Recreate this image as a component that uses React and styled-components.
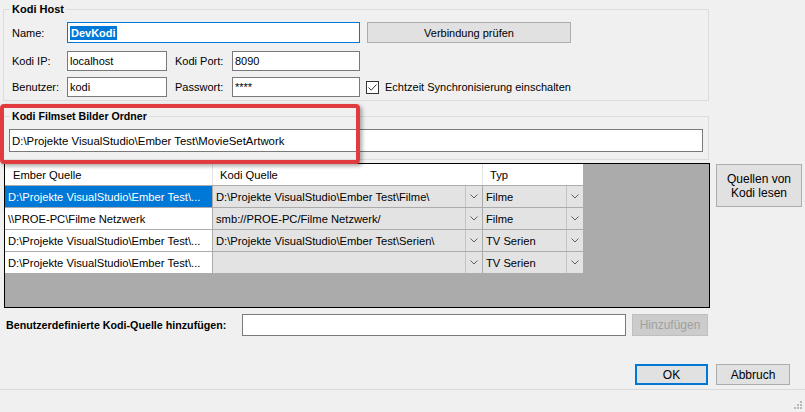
import styled, { createGlobalStyle } from "styled-components";

const GlobalStyle = createGlobalStyle`
  html, body {
    margin: 0;
    padding: 0;
    background: #f0f0f0;
  }
  body {
    font-family: "Liberation Sans", Arial, sans-serif;
    font-size: 11px;
    color: #000;
  }
`;

const Window = styled.div`
  position: relative;
  width: 805px;
  height: 412px;
  overflow: hidden;
  background: #f0f0f0;
`;

const GroupBox = styled.fieldset`
  box-sizing: border-box;
  width: 706px;
  margin: ${(p) => p.$top}px 0 0 3px;
  padding: ${(p) => p.$pad};
  border: 1px solid #dcdcdc;
  min-inline-size: 0;
`;

const Legend = styled.legend`
  font-weight: bold;
  font-size: ${(p) => p.$size || 11}px;
  line-height: 13px;
  padding: 0 2px;
  margin-left: ${(p) => p.$shift || 0}px;
`;

const Row = styled.div`
  display: flex;
  align-items: center;
  height: ${(p) => p.$h || 20}px;
  margin-top: ${(p) => p.$top || 0}px;
`;

const Label = styled.span`
  width: ${(p) => p.$w}px;
  margin-left: ${(p) => p.$left || 0}px;
  flex: none;
  white-space: nowrap;
`;

const TextBox = styled.div`
  box-sizing: border-box;
  flex: none;
  width: ${(p) => p.$w}px;
  height: ${(p) => p.$h || 20}px;
  background: #fff;
  border: 1px solid ${(p) => (p.$focus ? "#0078d7" : "#7a7a7a")};
  padding: 0 2px;
  display: flex;
  align-items: center;
  font-size: ${(p) => p.$size || 11}px;
  white-space: nowrap;
`;

const Selection = styled.span`
  background: #0078d7;
  color: #fff;
  font-weight: bold;
  line-height: 14px;
  padding: 0 1px;
`;

const Button = styled.div`
  box-sizing: border-box;
  flex: none;
  width: ${(p) => p.$w}px;
  height: ${(p) => p.$h || 21}px;
  margin-left: ${(p) => p.$left || 0}px;
  margin-top: ${(p) => p.$top || 0}px;
  display: flex;
  align-items: center;
  justify-content: center;
  text-align: center;
  background: ${(p) => (p.$disabled ? "#cccccc" : "#e1e1e1")};
  border: ${(p) => (p.$default ? "2px solid #0078d7" : `1px solid ${p.$disabled ? "#bfbfbf" : "#adadad"}`)};
  color: ${(p) => (p.$disabled ? "#a0a0a0" : "#000")};
  font-size: ${(p) => p.$size || 11}px;
  line-height: 14px;
`;

const CheckRow = styled.div`
  display: flex;
  align-items: center;
  margin-left: 6px;
  gap: 6px;
  white-space: nowrap;
`;

const CheckBox = styled.div`
  box-sizing: border-box;
  width: 13px;
  height: 13px;
  border: 1px solid #333;
  background: #fff;
  display: flex;
  align-items: center;
  justify-content: center;
`;

const Highlight = styled.div`
  position: absolute;
  left: 0;
  top: 104px;
  width: 360px;
  height: 60px;
  box-sizing: border-box;
  border: 4px solid #e23b3f;
  border-radius: 4px;
  box-shadow: 2px 2px 4px rgba(0, 0, 0, 0.35);
`;

const GridRow = styled.div`
  display: flex;
  align-items: flex-start;
  margin-top: 3px;
`;

const GridFrame = styled.div`
  box-sizing: border-box;
  width: 706px;
  height: 145px;
  margin-left: 4px;
  border: 1px solid #000;
  background: #ababab;
  font-size: 11.2px;
`;

const Table = styled.div`
  display: grid;
  grid-template-columns: 207px 269px 100px;
  grid-auto-rows: 21px;
  gap: 1px;
  width: 578px;
`;

const Header = styled.div`
  grid-column: 1 / -1;
  display: grid;
  grid-template-columns: 207px 269px 100px;
  gap: 1px;
  background: #e4e4e4;
  height: 21px;
`;

const HeadCell = styled.div`
  background: #fff;
  display: flex;
  align-items: center;
  padding-left: ${(p) => p.$pad}px;
`;

const Cell = styled.div`
  background: ${(p) => (p.$selected ? "#0078d7" : "#fff")};
  color: ${(p) => (p.$selected ? "#fff" : "#000")};
  display: flex;
  align-items: center;
  padding-left: 3px;
  white-space: nowrap;
`;

const Combo = styled.div`
  display: flex;
  background: #e3e3e3;
  min-width: 0;
`;

const ComboText = styled.div`
  flex: 1;
  display: flex;
  align-items: center;
  padding-left: 3px;
  white-space: nowrap;
`;

const ComboArrow = styled.div`
  width: 16px;
  flex: none;
  border-left: 1px solid #c4c4c4;
  display: flex;
  align-items: center;
  justify-content: center;
`;

const BottomRow = styled.div`
  display: flex;
  align-items: center;
  margin-top: 6px;
  height: 22px;
`;

const BoldLabel = styled.span`
  font-weight: bold;
  font-size: 10.7px;
  margin-left: 6px;
  width: 236px;
  flex: none;
  white-space: nowrap;
`;

const Footer = styled.div`
  display: flex;
  margin: 28px 0 0 635px;
`;

const Separator = styled.div`
  margin-top: 4px;
  height: 1px;
  background: #dadada;
`;

const Grip = styled.svg`
  position: absolute;
  right: 2px;
  bottom: 2px;
`;

const rows = [
  { ember: "D:\\Projekte VisualStudio\\Ember Test\\...", kodi: "D:\\Projekte VisualStudio\\Ember Test\\Filme\\", typ: "Filme", selected: true },
  { ember: "\\\\PROE-PC\\Filme Netzwerk", kodi: "smb://PROE-PC/Filme Netzwerk/", typ: "Filme" },
  { ember: "D:\\Projekte VisualStudio\\Ember Test\\...", kodi: "D:\\Projekte VisualStudio\\Ember Test\\Serien\\", typ: "TV Serien" },
  { ember: "D:\\Projekte VisualStudio\\Ember Test\\...", kodi: "", typ: "TV Serien" },
];

function Chevron() {
  return (
    <svg width="8" height="5" viewBox="0 0 8 5">
      <path d="M0.5 0.5 L4 4 L7.5 0.5" fill="none" stroke="#606060" strokeWidth="1" />
    </svg>
  );
}

function ComboCell({ value }) {
  return (
    <Combo>
      <ComboText>{value}</ComboText>
      <ComboArrow>
        <Chevron />
      </ComboArrow>
    </Combo>
  );
}

export default function App() {
  return (
    <Window>
      <GlobalStyle />
      <GroupBox $top={3} $pad="6px 8px 3px 8px">
        <Legend $shift={-2}>Kodi Host</Legend>
        <Row $h={21}>
          <Label $w={55}>Name:</Label>
          <TextBox $w={293} $h={21} $focus>
            <Selection>DevKodi</Selection>
          </TextBox>
          <Button $w={204} $left={7}>Verbindung prüfen</Button>
        </Row>
        <Row $top={8}>
          <Label $w={55}>Kodi IP:</Label>
          <TextBox $w={100}>localhost</TextBox>
          <Label $w={57} $left={8}>Kodi Port:</Label>
          <TextBox $w={128}>8090</TextBox>
        </Row>
        <Row $top={6}>
          <Label $w={55}>Benutzer:</Label>
          <TextBox $w={100}>kodi</TextBox>
          <Label $w={57} $left={8}>Passwort:</Label>
          <TextBox $w={128}>****</TextBox>
          <CheckRow>
            <CheckBox>
              <svg width="11" height="11" viewBox="0 0 11 11">
                <path d="M1.5 5.5 L4.2 8.2 L9.5 2.5" fill="none" stroke="#333" strokeWidth="1" />
              </svg>
            </CheckBox>
            <span>Echtzeit Synchronisierung einschalten</span>
          </CheckRow>
        </Row>
      </GroupBox>

      <GroupBox $top={9} $pad="6px 5px 7px 5px">
        <Legend $size={10.6} $shift={1}>Kodi Filmset Bilder Ordner</Legend>
        <TextBox $w={694} $h={23} $size={11.4}>
          D:\Projekte VisualStudio\Ember Test\MovieSetArtwork
        </TextBox>
      </GroupBox>

      <GridRow>
        <GridFrame>
          <Table>
            <Header>
              <HeadCell $pad={8}>Ember Quelle</HeadCell>
              <HeadCell $pad={7}>Kodi Quelle</HeadCell>
              <HeadCell $pad={7}>Typ</HeadCell>
            </Header>
            {rows.map((r, i) => [
              <Cell key={"e" + i} $selected={r.selected}>
                {r.ember}
              </Cell>,
              <ComboCell key={"k" + i} value={r.kodi} />,
              <ComboCell key={"t" + i} value={r.typ} />,
            ])}
          </Table>
        </GridFrame>
        <Button $w={86} $h={43} $left={6} $top={1} $size={12}>
          Quellen von
          <br />
          Kodi lesen
        </Button>
      </GridRow>

      <BottomRow>
        <BoldLabel>Benutzerdefinierte Kodi-Quelle hinzufügen:</BoldLabel>
        <TextBox $w={384} $h={22} />
        <Button $w={76} $h={22} $left={6} $disabled $size={12}>
          Hinzufügen
        </Button>
      </BottomRow>

      <Footer>
        <Button $w={73} $default $size={12}>OK</Button>
        <Button $w={74} $left={8} $size={12}>Abbruch</Button>
      </Footer>
      <Separator />

      <Highlight />
      <Grip width="10" height="10" viewBox="0 0 10 10">
        <rect x="7" y="1" width="2" height="2" fill="#b8b8b8" />
        <rect x="4" y="4" width="2" height="2" fill="#b8b8b8" />
        <rect x="7" y="4" width="2" height="2" fill="#b8b8b8" />
        <rect x="1" y="7" width="2" height="2" fill="#b8b8b8" />
        <rect x="4" y="7" width="2" height="2" fill="#b8b8b8" />
        <rect x="7" y="7" width="2" height="2" fill="#b8b8b8" />
      </Grip>
    </Window>
  );
}
